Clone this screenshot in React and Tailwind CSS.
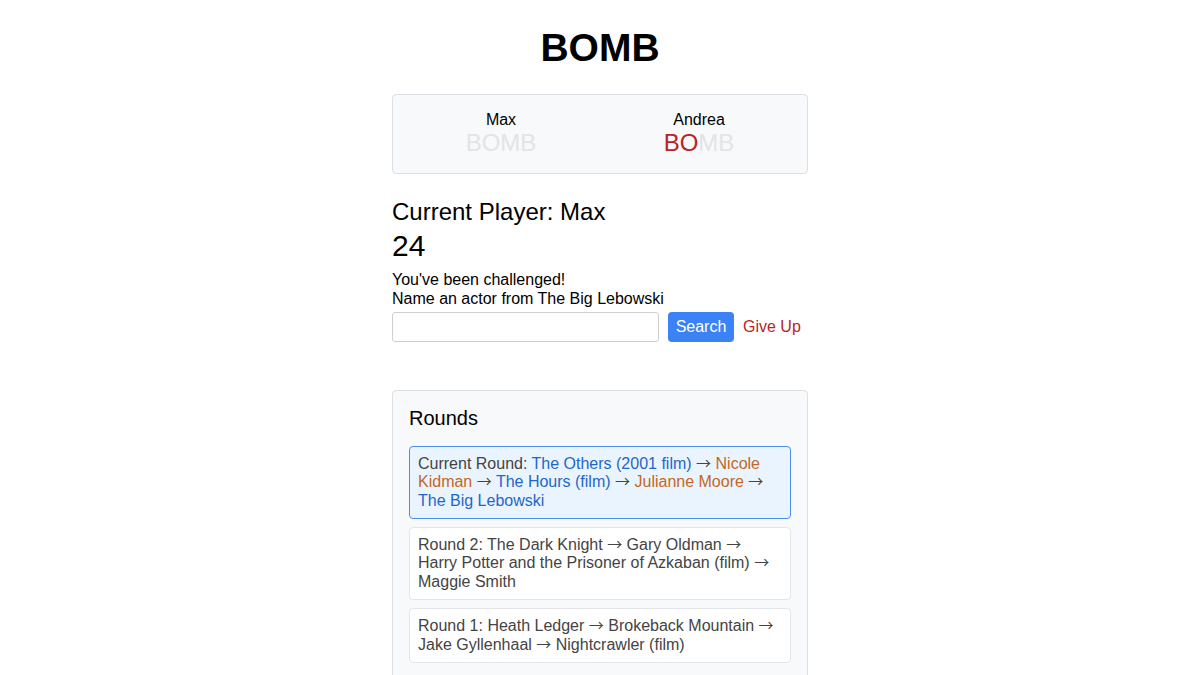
const A = () => <span style={{ fontFamily: '"Noto Sans CJK JP", sans-serif' }} className="text-[15px] leading-[1]">→</span>;

export default function App() {
  const B = "text-[#1f66c9]";
  const O = "text-[#c4671f]";
  return (
    <div className="min-h-[675px] bg-white text-black" style={{ fontFamily: '"Liberation Sans", Arial, sans-serif' }}>
      <div className="mx-auto w-[416px]">
        <h1 className="pt-[26px] text-center text-[39px] font-bold leading-[1.15]">BOMB</h1>
        <div className="mt-[23px] flex rounded border border-[#dcdfe3] bg-[#f8f9fa] px-[9px] py-4">
          <div className="flex flex-1 flex-col items-center">
            <div className="text-[16px] leading-[1.15]">Max</div>
            <div className="text-[24px] leading-[1.15] text-[#e3e4e7]">BOMB</div>
          </div>
          <div className="flex flex-1 flex-col items-center">
            <div className="text-[16px] leading-[1.15]">Andrea</div>
            <div className="text-[24px] leading-[1.15] text-[#e3e4e7]">
              <span className="text-[#b92424]">BO</span>MB
            </div>
          </div>
        </div>
        <div className="mt-[24px] text-[24px] leading-[1.15]">Current Player: Max</div>
        <div className="mt-[4px] text-[30px] leading-[1.15]">24</div>
        <div className="mt-[6px] text-[16px] leading-[19px]">You've been challenged!</div>
        <div className="text-[16px] leading-[19px]">Name an actor from The Big Lebowski</div>
        <div className="mt-[4px] flex items-center">
          <input className="h-[30px] w-[267px] rounded-[3px] border border-[#cfcfcf] bg-white px-2 text-[16px] outline-none" />
          <button className="ml-[9px] h-[30px] w-[66px] rounded-[4px] bg-[#3b82f6] text-[16px] text-white">Search</button>
          <span className="ml-[9px] text-[16px] text-[#b92424]">Give Up</span>
        </div>
        <div className="mt-[48px] rounded border border-[#dcdfe3] bg-[#f8f9fa] px-4 pt-4 pb-6">
          <div className="text-[20px] leading-[1.15]">Rounds</div>
          <div className="mt-4 flex flex-col gap-[8px] text-[16px] leading-[1.15] text-[#444]">
            <div className="rounded border border-[#4a8ff0] bg-[#eaf4fe] p-2">
              Current Round: <span className={B}>The Others (2001 film)</span> <A /> <span className={O}>Nicole Kidman</span> <A /> <span className={B}>The Hours (film)</span> <A /> <span className={O}>Julianne Moore</span> <A /> <span className={B}>The Big Lebowski</span>
            </div>
            <div className="rounded border border-[#e3e5e8] bg-white p-2">
              Round 2: The Dark Knight <A /> Gary Oldman <A /> Harry Potter and the Prisoner of Azkaban (film) <A /> Maggie Smith
            </div>
            <div className="rounded border border-[#e3e5e8] bg-white p-2">
              Round 1: Heath Ledger <A /> Brokeback Mountain <A /> Jake Gyllenhaal <A /> Nightcrawler (film)
            </div>
          </div>
        </div>
      </div>
    </div>
  );
}
